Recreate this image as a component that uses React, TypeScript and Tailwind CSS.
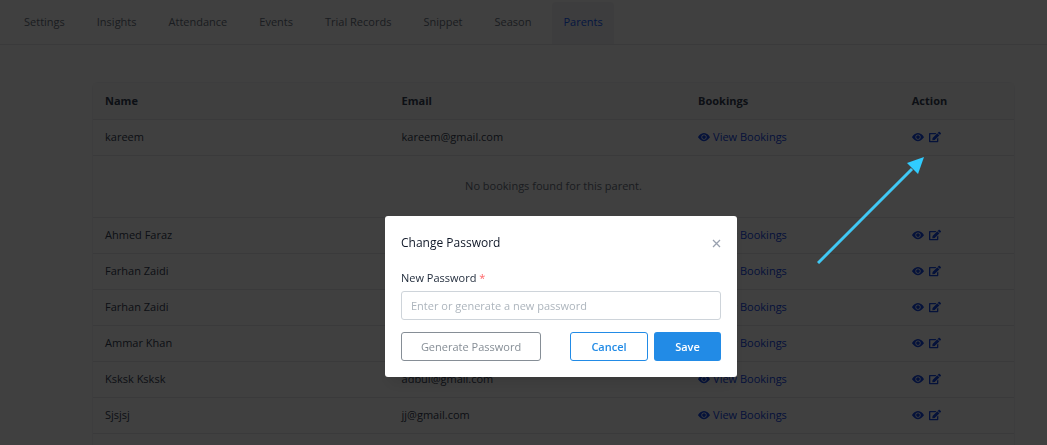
import React from "react";
import { BsEyeFill } from "react-icons/bs";
import { FaEdit } from "react-icons/fa";

type Parent = {
  name: string;
  email: string;
  open?: boolean;
};

const tabs = ["Settings", "Insights", "Attendance", "Events", "Trial Records", "Snippet", "Season", "Parents"];

const parents: Parent[] = [
  { name: "kareem", email: "kareem@gmail.com", open: true },
  { name: "Ahmed Faraz", email: "" },
  { name: "Farhan Zaidi", email: "" },
  { name: "Farhan Zaidi", email: "" },
  { name: "Ammar Khan", email: "" },
  { name: "Ksksk Ksksk", email: "adbul@gmail.com" },
  { name: "Sjsjsj", email: "jj@gmail.com" },
];

function TabBar() {
  return (
    <nav className="flex h-[45px] items-stretch gap-[10px] border-b border-gray-200 px-[13px] pt-[2px]">
      {tabs.map((tab) => (
        <a
          key={tab}
          href="#"
          className={
            tab === "Parents"
              ? "flex items-center rounded-t bg-gray-100 px-[11px] pb-[2px] font-medium text-blue-600"
              : "flex items-center px-[11px] pb-[2px] text-gray-500"
          }
        >
          {tab}
        </a>
      ))}
    </nav>
  );
}

function ParentRows({ parent }: { parent: Parent }) {
  return (
    <>
      <tr className="h-9 border-b border-gray-200">
        <td className="px-3">{parent.name}</td>
        <td className="px-3">{parent.email}</td>
        <td className="px-3">
          <button type="button" className="flex items-center gap-[3px] text-blue-700">
            <BsEyeFill size={12} />
            View Bookings
          </button>
        </td>
        <td className="px-3">
          <div className="flex items-center gap-[5px] text-blue-700">
            <button type="button" aria-label="View parent">
              <BsEyeFill size={12} />
            </button>
            <button type="button" aria-label="Change password">
              <FaEdit size={12} />
            </button>
          </div>
        </td>
      </tr>
      {parent.open && (
        <tr className="h-[62px] border-b border-gray-200">
          <td colSpan={4} className="text-center text-gray-500">
            No bookings found for this parent.
          </td>
        </tr>
      )}
    </>
  );
}

function ParentsTable() {
  return (
    <div className="flex-1 rounded-t-md border border-b-0 border-gray-100">
      <table className="w-full table-fixed border-collapse text-left text-gray-700">
        <thead>
          <tr className="h-9 border-b border-gray-200 bg-gray-50">
            <th className="w-[32.2%] px-3 font-bold">Name</th>
            <th className="w-[32.2%] px-3 font-bold">Email</th>
            <th className="w-[23.2%] px-3 font-bold">Bookings</th>
            <th className="px-3 font-bold">Action</th>
          </tr>
        </thead>
        <tbody>
          {parents.map((parent, index) => (
            <ParentRows key={index} parent={parent} />
          ))}
        </tbody>
      </table>
    </div>
  );
}

function PasswordDialog() {
  return (
    <div className="fixed inset-0 flex items-start justify-center bg-black/75 pt-[216px] pl-[75px]">
      <div
        role="dialog"
        aria-labelledby="dialog-title"
        className="w-full max-w-[352px] rounded-[3px] bg-white px-4 pt-[18px] pb-4 shadow-lg"
      >
        <div className="flex items-center justify-between">
          <h2 id="dialog-title" className="text-xs leading-[18px] text-gray-900">
            Change Password
          </h2>
          <button type="button" aria-label="Close" className="text-gray-400">
            <svg width="9" height="9" viewBox="0 0 9 9" fill="none" stroke="currentColor" strokeWidth="1.3">
              <path d="M1 1l7 7M8 1L1 8" />
            </svg>
          </button>
        </div>

        <form className="mt-[18px]">
          <label htmlFor="new-password" className="block font-medium text-gray-800">
            New Password <span className="font-normal text-red-400">*</span>
          </label>
          <input
            id="new-password"
            type="text"
            placeholder="Enter or generate a new password"
            className="mt-[5px] block h-[29px] w-full rounded-[3px] border border-[#ced4da] px-[9px] placeholder:text-[#adb5bd]"
          />
          <div className="mt-3 flex items-center gap-[6px]">
            <button
              type="button"
              className="mr-auto h-[29px] w-[140px] rounded-[3px] border border-[#868e96] font-medium text-[#868e96]"
            >
              Generate Password
            </button>
            <button
              type="button"
              className="h-[29px] w-[78px] rounded-[3px] border border-[#228be6] font-semibold text-[#228be6]"
            >
              Cancel
            </button>
            <button type="button" className="h-[29px] w-[67px] rounded-[3px] bg-[#228be6] font-semibold text-white">
              Save
            </button>
          </div>
        </form>
      </div>
    </div>
  );
}

// Pointer from the dialog to the edit action of the first row
function Pointer() {
  return (
    <svg
      className="pointer-events-none absolute top-[157px] right-[123px]"
      width="107"
      height="107"
      viewBox="0 0 107 107"
      aria-hidden="true"
    >
      <path d="M1 106L95 12" stroke="#40c8f4" strokeWidth="3" />
      <path d="M107 0L90 6L101 17Z" fill="#30ccff" />
    </svg>
  );
}

export default function App() {
  return (
    <div className="relative flex min-h-screen flex-col bg-white font-['Open_Sans',sans-serif] text-[11px] leading-4">
      <TabBar />
      <main className="flex flex-1 flex-col pt-[37px] pr-8 pl-[92px]">
        <ParentsTable />
      </main>
      <PasswordDialog />
      <Pointer />
    </div>
  );
}
